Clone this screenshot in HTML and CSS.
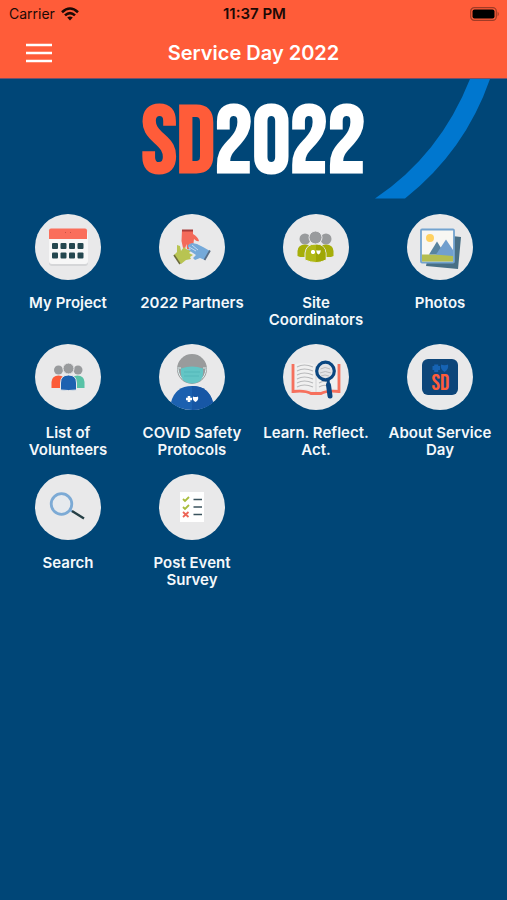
FILE: index.html
```html
<!DOCTYPE html>
<html lang="en">
<head>
    <meta charset="UTF-8">
    <meta name="viewport" content="width=device-width, initial-scale=1.0">
    <title>Service Day 2022</title>
    <link rel="stylesheet" href="styles.css">
</head>
<body>
    <header class="header">
        <div class="status-bar">
            <div class="carrier">
                <span>Carrier</span>
                <svg width="18" height="14" viewBox="0 0 18 14" fill="none" stroke="#1c0a06" stroke-width="2.6">
                    <path d="M1 5.2Q9-2.2 17 5.2M4 8.4Q9 3.8 14 8.4"/>
                    <path d="M6.2 10.6Q9 8.2 11.8 10.6L9 13.6Z" fill="#1c0a06" stroke="none"/>
                </svg>
            </div>
            <div class="time">11:37 PM</div>
            <div class="battery">
                <svg width="30" height="14" viewBox="0 0 30 14">
                    <rect x="0.7" y="0.7" width="25.6" height="12.6" rx="3.6" fill="none" stroke="#a03b26" stroke-width="1.2"/>
                    <rect x="2.5" y="2.5" width="22" height="9" rx="2" fill="#000"/>
                    <path d="M27.6 4.5Q30 7 27.6 9.5Z" fill="#a03b26"/>
                </svg>
            </div>
        </div>
        <div class="nav-bar">
            <button class="menu-btn" aria-label="Menu">
                <svg width="26" height="20" viewBox="0 0 26 20" stroke="#fff" stroke-width="2.6">
                    <path d="M0 2H26M0 10H26M0 18H26"/>
                </svg>
            </button>
            <h1>Service Day 2022</h1>
        </div>
    </header>

    <div class="banner">
        <svg class="banner-arc" width="120" height="120" viewBox="0 0 120 120">
            <path d="M98 0Q68 76 3 119.5H33Q93 72 118 0Z" fill="#0077cf"/>
        </svg>
        <div class="logo"><span>SD</span>2022</div>
    </div>

    <nav class="menu-grid">
        <a class="menu-item" href="#">
            <svg class="icon" viewBox="0 0 66 66">
                <circle cx="33" cy="33" r="33" fill="#e9e9ea"/>
                <rect x="14" y="17" width="39" height="35" rx="3" fill="#d5d6d8"/>
                <rect x="14" y="17" width="39" height="33" rx="3" fill="#f7f7f7"/>
                <path d="M14 25V16.5Q14 14.5 16 14.5H50Q52 14.5 52 16.5V25Z" fill="#fa6e5b"/>
                <path d="M30 18.5h1M35 18.5h1" stroke="#c94f42"/>
                <g fill="#24474f">
                    <rect x="17" y="29" width="6" height="6" rx="1"/>
                    <rect x="25.5" y="29" width="6" height="6" rx="1"/>
                    <rect x="34" y="29" width="6" height="6" rx="1"/>
                    <rect x="42.5" y="29" width="6" height="6" rx="1"/>
                    <rect x="17" y="38.5" width="6" height="6" rx="1"/>
                    <rect x="25.5" y="38.5" width="6" height="6" rx="1"/>
                    <rect x="34" y="38.5" width="6" height="6" rx="1"/>
                    <rect x="42.5" y="38.5" width="6" height="6" rx="1"/>
                </g>
            </svg>
            <span>My Project</span>
        </a>
        <a class="menu-item" href="#">
            <svg class="icon" viewBox="0 0 66 66">
                <circle cx="33" cy="33" r="33" fill="#e9e9ea"/>
                <path d="M23 16H34V20Q39 23 40 27Q38 28 35 25L34 33H32L31 29 30 35H28L27.5 30 26 35 24 34 22.5 27Z" fill="#f36a5a"/>
                <path d="M23 16.5H34" stroke="#a83c3a" stroke-width="2"/>
                <path d="M15 41 18 38V31L21 32 22 37 25 33 27 35 32 37 30 39 34 41 31 43 32 45 27 46 22 50Z" fill="#b8c452"/>
                <path d="M15 41 21 50" stroke="#6b6b3a" stroke-width="1.6"/>
                <path d="M29 31 33 29 38 30 44 33 51 37 46 46 41 44 36 46 34 44 37 41 31 37 28 35 32 36 29 33Z" fill="#75a9d9"/>
                <path d="M30 33 37 37M33 31 39 36" stroke="#d9e7f4" stroke-width=".8"/>
                <path d="M51 36.5 45.5 46" stroke="#596e86" stroke-width="1.8"/>
            </svg>
            <span>2022 Partners</span>
        </a>
        <a class="menu-item" href="#">
            <svg class="icon" viewBox="0 0 66 66">
                <circle cx="33" cy="33" r="33" fill="#e9e9ea"/>
                <g fill="#999b9d">
                    <circle cx="22" cy="25" r="5.5"/>
                    <circle cx="43" cy="25" r="5.5"/>
                </g>
                <path d="M14.5 42V37Q15 30.5 22 30.5T29 37V43H17ZM36 43V37Q36 30.5 43 30.5T50.5 37V42L48 43Z" fill="#a6ae0a"/>
                <path d="M22 46V39Q23 30 32.5 30T43 39V46Q37 48.5 32.5 48.5T22 46Z" fill="#b1b916" stroke="#e9e9ea"/>
                <path d="M33 30.5Q42.5 31 42.5 39V45.6Q38 48 33 48Z" fill="#9fa706"/>
                <circle cx="32.5" cy="23.5" r="6.5" fill="#999b9d" stroke="#e9e9ea"/>
                <path d="M28 38H32M30 36V40" stroke="#fff" stroke-width="2.6"/>
                <path d="M33.5 36Q35.5 37 37.5 36 38 39 35.5 40.5 33 39 33.5 36Z" fill="#fff"/>
            </svg>
            <span>Site Coordinators</span>
        </a>
        <a class="menu-item" href="#">
            <svg class="icon" viewBox="0 0 66 66">
                <circle cx="33" cy="33" r="33" fill="#e9e9ea"/>
                <path d="M45 22 54 23 51 55 19 52 20 47Z" fill="#486f85"/>
                <rect x="14" y="15.5" width="33" height="33" rx="1" fill="#f8f7f3" stroke="#73a3cf" stroke-width="1.8"/>
                <path d="M15 40.5H46V47.5H15Z" fill="#b4bd50"/>
                <path d="M22 40.5 30 27.5 38 40.5Z" fill="#57839f"/>
                <path d="M29 40.5 39 25.5 46 36V42L34 41Z" fill="#719fce"/>
                <circle cx="23" cy="24" r="4" fill="#ffd160"/>
            </svg>
            <span>Photos</span>
        </a>
        <a class="menu-item" href="#">
            <svg class="icon" viewBox="0 0 66 66">
                <circle cx="33" cy="33" r="33" fill="#e9e9ea"/>
                <circle cx="23.5" cy="26" r="4.5" fill="#999b9d"/>
                <circle cx="43" cy="26" r="4.5" fill="#999b9d"/>
                <path d="M16.5 44V38Q17 31.5 23.5 31.5T30 38V44Z" fill="#fc5b38"/>
                <path d="M36 44V38Q36 31.5 42.5 31.5T49.5 38V44Z" fill="#58c2a6"/>
                <path d="M25.5 46V39Q25.5 31 33.5 31T41.5 39V46Q33.5 47 25.5 46Z" fill="#1d62b0" stroke="#e9e9ea"/>
                <circle cx="33.5" cy="24.5" r="5.5" fill="#999b9d" stroke="#e9e9ea"/>
            </svg>
            <span>List of Volunteers</span>
        </a>
        <a class="menu-item" href="#">
            <svg class="icon" viewBox="0 0 66 66">
                <circle cx="33" cy="33" r="33" fill="#e9e9ea"/>
                <path d="M12 58.5Q16 42 33 42T54 58.5Q45 66 33 66T12 58.5Z" fill="#1c61b0"/>
                <path d="M33 42Q50 42 54 58.5 45 66 33 66Z" fill="#1757a5"/>
                <circle cx="33" cy="25" r="15" fill="#999b9c"/>
                <path d="M18.5 24H22M44 24H47.5M19 25Q20 33 25 36M47 25Q46 33 41 36" stroke="#d9eeee" fill="none"/>
                <path d="M22 24.5Q33 20.5 44 24.5Q45 33 41 37 33 42 25 37 21 33 22 24.5Z" fill="#63c5c5"/>
                <path d="M25 28H41M25 32H40" stroke="#4fb2b4" stroke-width=".7"/>
                <path d="M27 55H33M30 52V58" stroke="#fff" stroke-width="2.6"/>
                <path d="M34 52.5Q36.5 53.5 39 52.5 40 56 36.5 58 33 56 34 52.5Z" fill="#fff"/>
            </svg>
            <span>COVID Safety Protocols</span>
        </a>
        <a class="menu-item" href="#">
            <svg class="icon" viewBox="0 0 66 66">
                <circle cx="33" cy="33" r="33" fill="#e9e9ea"/>
                <path d="M10 20V47.5Q22 46 28 49.5H38Q44 46 56 47.5V20" fill="none" stroke="#f6705d" stroke-width="2.8"/>
                <path d="M12 20Q26 17 33 22 40 17 54 20V45Q40 44 33 48 26 44 12 45Z" fill="#f0f0f0"/>
                <path d="M33 22V48" stroke="#d2d2d4"/>
                <path d="M14 23Q21 19 30 23M14 27Q21 23 30 27M14 31Q21 27 30 31M14 35Q21 31 30 35M14 39Q21 35 30 39M14 43Q21 39 30 43M36 35Q41 32 45 34M36 39Q41 36 44 38M36 43Q41 40 44 42" fill="none" stroke="#b8b9bb" stroke-width="1.1"/>
                <circle cx="42.5" cy="27" r="8.8" fill="#e4e4e6" stroke="#0a4680" stroke-width="3.2"/>
                <path d="M37.5 25Q42 22 47 25M37 29Q42 26 48 29M38 32Q42 30 46 32" stroke="#bcbcbf" fill="none"/>
                <path d="M45 36 45.5 40" stroke="#0a4680" stroke-width="3"/>
                <path d="M45.5 41 47 52" stroke="#0a4680" stroke-width="5" stroke-linecap="round"/>
            </svg>
            <span>Learn. Reflect. Act.</span>
        </a>
        <a class="menu-item" href="#">
            <svg class="icon" viewBox="0 0 66 66">
                <circle cx="33" cy="33" r="33" fill="#e9e9ea"/>
                <rect x="15" y="15" width="36" height="36" rx="6" fill="#0d467a"/>
                <path d="M25.5 24H33M29.2 20.5V28" stroke="#1663b4" stroke-width="4"/>
                <path d="M34 20.5Q37.5 22 41 20.5 42 25 37.5 28 33 25 34 20.5Z" fill="#1663b4"/>
                <text class="badge-text" x="33.5" y="46" text-anchor="middle">SD</text>
            </svg>
            <span>About Service Day</span>
        </a>
        <a class="menu-item" href="#">
            <svg class="icon" viewBox="0 0 66 66">
                <circle cx="33" cy="33" r="33" fill="#e9e9ea"/>
                <circle cx="26.5" cy="30" r="10.3" fill="#e6eaee" stroke="#7caad5" stroke-width="2.8"/>
                <path d="M34 35.5 38 38" stroke="#7caad5" stroke-width="2"/>
                <path d="M37 37 49 44.5" stroke="#263f45" stroke-width="2.4"/>
            </svg>
            <span>Search</span>
        </a>
        <a class="menu-item" href="#">
            <svg class="icon" viewBox="0 0 66 66">
                <circle cx="33" cy="33" r="33" fill="#e9e9ea"/>
                <rect x="21" y="18" width="24" height="30" fill="#fff"/>
                <path d="M24 25 26 27 30 23M24 33 26 35 30 31" fill="none" stroke="#a9bd3d" stroke-width="1.8"/>
                <path d="M24 38 29.5 43M29.5 38 24 43" stroke="#ed6557" stroke-width="1.8"/>
                <path d="M34.5 25.5H43M34.5 33H43M34.5 40.5H43" stroke="#3b535e" stroke-width="1.6"/>
            </svg>
            <span>Post Event Survey</span>
        </a>
    </nav>
</body>
</html>
```
FILE: styles.css
```css
* {
    box-sizing: border-box;
}
body {
    background: #004677;
    color: #fff;
    font-family: Inter, "Liberation Sans", sans-serif;
    min-height: 100vh;
    margin: 0;
}
.header {
    background: #ff5c39;
    border-bottom: 1px solid #75506a;
}
.status-bar {
    display: grid;
    grid-template-columns: 1fr auto 1fr;
    align-items: center;
    height: 27px;
    padding: 0 7px 0 9px;
    color: #1c0a06;
    font-size: 14px;
}
.carrier {
    display: flex;
    align-items: center;
    gap: 6px;
}
.time {
    font-size: 15px;
    font-weight: 600;
}
.battery {
    display: flex;
    justify-content: flex-end;
}
.nav-bar {
    display: grid;
    grid-template-columns: 1fr auto 1fr;
    align-items: center;
    height: 51px;
    padding: 0 26px;
}
.nav-bar h1 {
    margin: 0;
    font-size: 20px;
    font-weight: 600;
}
.menu-btn {
    display: flex;
    justify-self: start;
    padding: 0;
    background: none;
    border: none;
    cursor: pointer;
}
.banner {
    position: relative;
    display: flex;
    justify-content: center;
    padding: 10px 0;
}
.banner-arc {
    position: absolute;
    top: 0;
    right: 15px;
}
.logo {
    font-family: "Bebas Neue", "Liberation Sans Narrow", "Liberation Sans", sans-serif;
    font-size: 94px;
    font-weight: bold;
    line-height: 100px;
    padding-top: 5px;
    margin-bottom: -5px;
}
.logo span {
    color: #ff5c39;
}
.menu-grid {
    display: grid;
    grid-template-columns: repeat(4, 1fr);
    row-gap: 14px;
    padding: 15px 5px 15px 6px;
}
.menu-item {
    display: flex;
    flex-direction: column;
    align-items: center;
    gap: 14px;
    min-height: 116px;
    padding: 0 8px;
    color: #f4f8fb;
    font-size: 15px;
    font-weight: 600;
    line-height: 17px;
    text-align: center;
    text-decoration: none;
}
.icon {
    width: 66px;
    height: 66px;
}
.badge-text {
    fill: #ff5c39;
    font-family: "Bebas Neue", "Liberation Sans Narrow", "Liberation Sans", sans-serif;
    font-size: 23px;
}
```
